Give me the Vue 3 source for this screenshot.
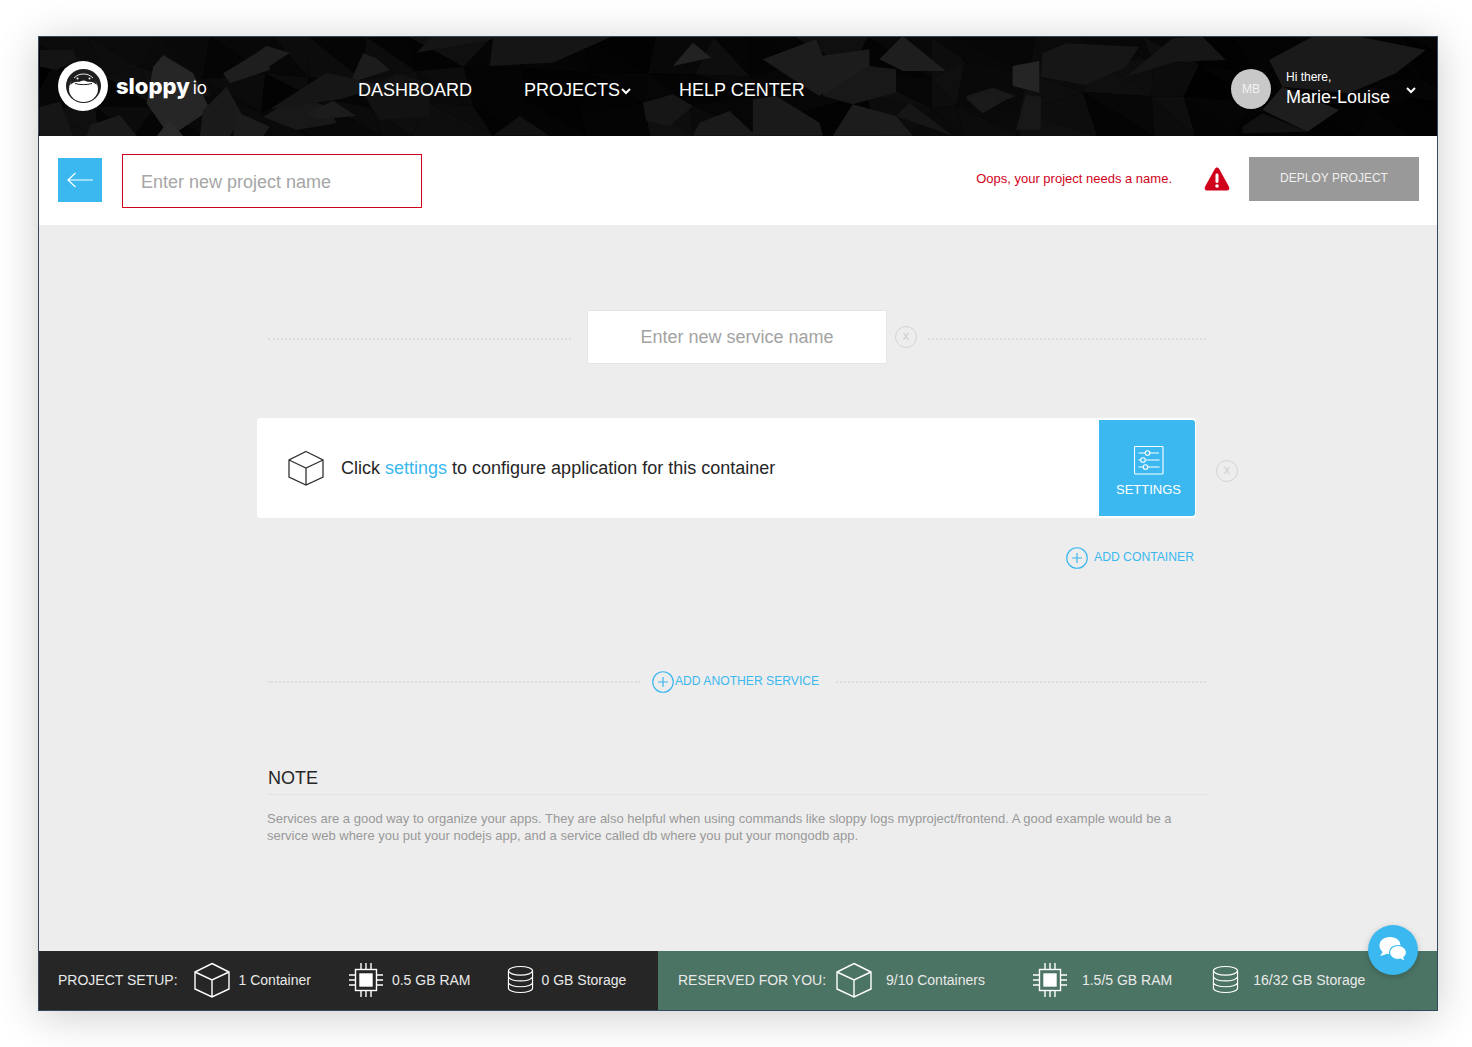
<template>
  <div class="page">
    <div class="window">
      <header class="topbar">
        <svg class="shards" viewBox="0 0 1399 99" preserveAspectRatio="none">
          <polygon v-for="(s, i) in baseShards" :key="'b' + i" :points="s.p" :fill="s.c" />
          <polygon v-for="(s, i) in shards" :key="i" :points="s.p" :fill="s.c" />
        </svg>
        <div class="brand">
          <svg class="brand-mark" viewBox="0 0 50 50">
            <circle cx="25" cy="25" r="25" fill="#fff" />
            <ellipse cx="25.500" cy="25" rx="17.500" ry="17" fill="#1f1f1f" />
            <ellipse cx="25.500" cy="28" rx="14.500" ry="13" fill="#fff" />
            <path d="M12 24c2-7 7-12 13.500-12S37 17 39 24c-3-3-7-4-9-3-1.500-1-3-1.500-4.500-1.500S22.500 20 21 21c-2-1-6 0-9 3z" fill="#1f1f1f" />
            <path d="M16 17c3-3 6-4 9.500-4s6.500 1 9.500 4" fill="none" stroke="#fff" stroke-width=".9" />
            <path d="M17 22.500c5 1.500 12 1.500 17 0" fill="none" stroke="#1f1f1f" stroke-width="1" />
            <circle cx="19.500" cy="17.500" r="1" fill="#fff" />
            <circle cx="31.500" cy="17.500" r="1" fill="#fff" />
          </svg>
          <span class="brand-name">sloppy</span>
          <span class="brand-io">io</span>
        </div>
        <nav class="nav">
          <a>DASHBOARD</a>
          <a class="nav-projects">PROJECTS<svg class="chev small" viewBox="0 0 10 7"><path d="M1 1l4 4 4-4" /></svg></a>
          <a>HELP CENTER</a>
        </nav>
        <div class="user">
          <div class="avatar">MB</div>
          <div class="user-text">
            <div class="hi">Hi there,</div>
            <div class="user-name">Marie-Louise</div>
          </div>
          <svg class="chev" viewBox="0 0 10 7"><path d="M1 1l4 4 4-4" /></svg>
        </div>
      </header>

      <div class="toolbar">
        <button class="back">
          <svg viewBox="0 0 26 16" width="26" height="16"><path d="M26 8H1M8.500 1L1 8l7.500 7" /></svg>
        </button>
        <div class="project-input">Enter new project name</div>
        <div class="error-text">Oops, your project needs a name.</div>
        <svg class="warn" viewBox="0 0 26 26" width="26" height="26">
          <path d="M13 1.500c-1 0-1.700.6-2.200 1.500L1 20.800c-1 2 0 3.700 2 3.700h20c2 0 3-1.700 2-3.700L15.200 3c-.5-.9-1.200-1.500-2.200-1.500z" fill="#d0021b" />
          <rect x="11.500" y="7.500" width="3" height="9.500" rx="1.400" fill="#fff" />
          <circle cx="13" cy="20" r="1.800" fill="#fff" />
        </svg>
        <button class="deploy">DEPLOY PROJECT</button>
      </div>

      <main class="main">
        <div class="service-row">
          <span class="dots dots-a"></span>
          <div class="service-input">Enter new service name</div>
          <span class="close">x</span>
          <span class="dots dots-b"></span>
        </div>

        <div class="card-row">
          <div class="card">
            <svg class="card-cube" viewBox="0 0 36 36" width="36" height="36">
              <path d="M18 1.500L35 10v17L18 35 1 27V10zM1 10l17 8 17-8M18 18v17" />
            </svg>
            <p class="card-text">Click <a>settings</a> to configure application for this container</p>
            <div class="settings">
              <svg viewBox="0 0 30 30" width="30" height="30">
                <rect x=".5" y=".5" width="28.500" height="27.500" rx="1" />
                <path d="M4.500 7h6.500m5 0h9M4.500 14h2.500m5 0h13.500M4.500 21h4.500m5 0h11.500" />
                <circle cx="13.500" cy="7" r="2.300" />
                <circle cx="9" cy="14" r="2.300" />
                <circle cx="11.500" cy="21" r="2.300" />
              </svg>
              <span>SETTINGS</span>
            </div>
          </div>
          <span class="close close-card">x</span>
        </div>

        <div class="add-container">
          <svg class="plus" viewBox="0 0 22 22" width="22" height="22">
            <circle cx="11" cy="11" r="10.250" />
            <path d="M11 6v10M6 11h10" />
          </svg>
          <span>ADD CONTAINER</span>
        </div>

        <div class="another-row">
          <span class="dots dots-c"></span>
          <svg class="plus" viewBox="0 0 22 22" width="22" height="22">
            <circle cx="11" cy="11" r="10.250" />
            <path d="M11 6v10M6 11h10" />
          </svg>
          <span class="another-label">ADD ANOTHER SERVICE</span>
          <span class="dots dots-d"></span>
        </div>

        <section class="note">
          <h2>NOTE</h2>
          <p>Services are a good way to organize your apps. They are also helpful when using commands like sloppy logs myproject/frontend. A good example would be a service web where you put your nodejs app, and a service called db where you put your mongodb app.</p>
        </section>
      </main>

      <footer class="footer">
        <div v-for="group in footerGroups" :key="group.label" class="foot-group" :class="group.cls">
          <span class="foot-label">{{ group.label }}</span>
          <div v-for="item in group.items" :key="item.text" class="foot-item" :class="item.cls">
            <svg v-if="item.icon === 'cube'" viewBox="0 0 36 36" width="36" height="36" class="foot-icon">
              <path d="M18 1.500L35 10v17L18 35 1 27V10zM1 10l17 8 17-8M18 18v17" />
            </svg>
            <svg v-else-if="item.icon === 'chip'" viewBox="0 0 36 36" width="36" height="36" class="foot-icon">
              <rect x="7.500" y="7.500" width="21" height="21" />
              <rect x="12" y="12" width="12" height="12" class="solid" />
              <path d="M13 1v6.500M18 1v6.500M23 1v6.500M13 28.500V35M18 28.500V35M23 28.500V35M1 13h6.500M1 18h6.500M1 23h6.500M28.500 13H35M28.500 18H35M28.500 23H35" />
            </svg>
            <svg v-else viewBox="0 0 28 30" width="27" height="29" class="foot-icon db">
              <ellipse cx="14" cy="6" rx="12.500" ry="4.500" />
              <path d="M1.500 6v18c0 2.500 5.500 4.500 12.500 4.500s12.500-2 12.500-4.500V6M1.500 12c0 2.500 5.500 4.500 12.500 4.500s12.500-2 12.500-4.500M1.500 18c0 2.500 5.500 4.500 12.500 4.500s12.500-2 12.500-4.500" />
            </svg>
            <span>{{ item.text }}</span>
          </div>
        </div>
      </footer>

      <div class="chat">
        <svg viewBox="0 0 30 30" width="30" height="30">
          <path d="M12 2C6 2 1.500 5.500 1.500 10.500c0 2.500 1.200 4.700 3 6.300-.3 1.700-1.500 3-2.800 4 2.400 0 5-.8 6.800-2 1.100.3 2.300.4 3.500.4 6 0 10.500-3.700 10.500-8.700S18 2 12 2z" fill="#fff" />
          <path d="M20 10.500c-4.800 0-8.500 3-8.500 7s3.700 7 8.500 7c.9 0 1.800-.1 2.600-.3 1.300.9 3 1.600 5.200 1.700-1-.9-1.800-2-2-3.400 1.700-1.300 2.700-3 2.700-5 0-4-3.700-7-8.500-7z" fill="#fff" stroke="#3bb8ef" stroke-width="1.200" />
        </svg>
      </div>
    </div>
  </div>
</template>

<script setup>
// header texture: a dim jittered triangle strip, then brighter shards on top
let seed = 7
const rnd = () => {
  seed = (seed * 16807) % 2147483647
  return seed / 2147483647
}
const grey = (v) => {
  const h = Math.round(v).toString(16).padStart(2, '0')
  return `#${h}${h}${h}`
}
const baseShards = []
const rows = [0, 33, 66, 99]
const grid = []
for (let col = 0; col <= 26; col++) {
  grid.push(rows.map((y) => [col * 55 + (rnd() - 0.5) * 34, y === 0 || y === 99 ? y : y + (rnd() - 0.5) * 22]))
}
for (let col = 0; col < 26; col++) {
  for (let r = 0; r < 3; r++) {
    const a = grid[col][r]
    const b = grid[col + 1][r]
    const c = grid[col + 1][r + 1]
    const d = grid[col][r + 1]
    // the strip is darker behind the nav and towards the user block
    const x = col * 55
    const dim = (x > 470 && x < 590) || x > 1150 ? 0.35 : 1
    baseShards.push({ p: [a, b, c].join(' '), c: grey((3 + rnd() * 12) * dim) })
    baseShards.push({ p: [a, c, d].join(' '), c: grey((3 + rnd() * 12) * dim) })
  }
}

// points read off 3x crops of the shot (ox/oy = crop offset)
const shard = (ox, oy, c, pts) => ({
  c,
  p: pts
    .split(' ')
    .map((pt) => {
      const [x, y] = pt.split(',').map(Number)
      return `${ox + x / 3},${oy + y / 3}`
    })
    .join(' ')
})

const shards = [
  shard(-9, -7, '#141414', '30,60 130,60 140,90 80,120 30,110'),
  shard(-9, -7, '#161616', '30,230 90,215 130,318 30,318'),
  shard(-9, -7, '#1a1a1a', '170,318 180,285 270,255 320,318'),
  shard(-9, -7, '#262626', '370,110 400,75 490,130 540,240 420,320 350,220'),
  shard(-9, -7, '#2a2a2a', '380,318 420,270 460,318'),
  shard(-9, -7, '#1a1a1a', '520,240 590,170 640,260 600,318 510,318'),
  shard(-9, -7, '#1e1e1e', '580,130 710,50 720,120 600,160'),
  shard(-9, -7, '#1c1c1c', '610,318 620,245 720,290 700,318'),
  shard(-9, -7, '#181818', '700,260 800,200 900,230 920,280 800,300'),
  shard(-9, -7, '#1c1c1c', '1000,70 1040,85 1080,120 960,160'),
  shard(-9, -7, '#121212', '1000,190 1100,130 1200,160 1200,260 1050,270'),
  shard(161, -1, '#1e1e1e', '70,120 200,30 270,50 210,90'),
  shard(161, -1, '#161616', '210,220 380,110 560,150 420,190'),
  shard(161, -1, '#1c1c1c', '320,230 400,195 470,240 350,250'),
  shard(161, -1, '#151515', '650,50 880,10 870,90 1060,80 1240,0 700,0'),
  shard(161, -1, '#111111', '880,299 960,240 1050,299'),
  shard(581, -1, '#222222', '160,90 220,20 275,65'),
  shard(581, -1, '#161616', '70,200 160,175 220,210 150,270 80,255'),
  shard(581, -1, '#1a1a1a', '240,260 330,225 410,299 220,299'),
  shard(581, -1, '#1a1a1a', '400,190 470,180 600,260 610,299 400,299'),
  shard(581, -1, '#1c1c1c', '430,70 590,10 640,140 600,180 520,130'),
  shard(581, -1, '#1c1c1c', '600,60 750,40 750,100 610,180'),
  shard(581, -1, '#1e1e1e', '780,70 850,0 980,105 850,105'),
  shard(581, -1, '#181818', '610,180 750,90 830,100 830,170 700,205'),
  shard(581, -1, '#1c1c1c', '640,299 700,205 830,240 880,299'),
  shard(581, -1, '#161616', '830,240 870,200 1000,299'),
  shard(581, -1, '#191919', '1040,180 1120,155 1190,180 1080,225'),
  shard(581, -1, '#252525', '1180,90 1260,75 1260,170 1180,150'),
  shard(911, -7, '#181818', '200,299 230,195 275,200 275,299'),
  shard(911, -7, '#161616', '275,140 280,70 350,40 570,50 530,110 410,165'),
  shard(911, -7, '#1a1a1a', '50,205 120,185 160,215 100,250'),
  shard(911, -7, '#161616', '530,140 670,25 760,20 830,90 680,95'),
  shard(911, -7, '#1a1a1a', '960,90 1090,20 1230,20 1430,60 1340,130 1200,190 1000,170'),
  shard(911, -7, '#1e1e1e', '940,240 1000,170 1170,240 1075,305'),
  shard(911, -7, '#111111', '880,290 940,250 1075,305 880,310')
]

const footerGroups = [
  {
    label: 'PROJECT SETUP:',
    cls: 'left',
    items: [
      { icon: 'cube', text: '1 Container', cls: 'l1' },
      { icon: 'chip', text: '0.5 GB RAM', cls: 'l2' },
      { icon: 'db', text: '0 GB Storage', cls: 'l3' }
    ]
  },
  {
    label: 'RESERVED FOR YOU:',
    cls: 'right',
    items: [
      { icon: 'cube', text: '9/10 Containers', cls: 'r1' },
      { icon: 'chip', text: '1.5/5 GB RAM', cls: 'r2' },
      { icon: 'db', text: '16/32 GB Storage', cls: 'r3' }
    ]
  }
]
</script>

<style>
html, body {
  margin: 0;
  background: #fff;
}
</style>

<style scoped>
.page {
  box-sizing: border-box;
  height: 1047px;
  padding: 36px 0 0 38px;
  overflow: hidden;
}
.window {
  position: relative;
  box-sizing: border-box;
  width: 1400px;
  height: 975px;
  border: 1px solid #34495e;
  display: flex;
  flex-direction: column;
  background: #ededed;
  box-shadow: 0 5px 40px rgba(0, 0, 0, 0.2);
  font-family: "Liberation Sans", Arial, sans-serif;
  color: #262626;
}

.topbar {
  position: relative;
  flex: none;
  height: 99px;
  display: flex;
  align-items: center;
  background: #000;
  color: #fff;
  overflow: hidden;
}
.shards {
  position: absolute;
  inset: 0;
  width: 100%;
  height: 100%;
}
.brand, .nav, .user {
  position: relative;
  display: flex;
  align-items: center;
}
.brand {
  margin-left: 19px;
  width: 300px;
  margin-top: -1px;
}
.brand-mark {
  width: 50px;
  height: 50px;
  flex: none;
}
.brand-name {
  margin-left: 8px;
  font-family: Inter, sans-serif;
  font-size: 22px;
  font-weight: 800;
}
.brand-io {
  margin-left: 3px;
  font-family: Inter, sans-serif;
  font-size: 17px;
  font-weight: 400;
  position: relative;
  top: 2px;
}
.nav {
  gap: 48px;
  font-size: 18px;
  margin-top: 7px;
}
.nav-projects {
  display: flex;
  align-items: center;
  margin-left: 4px;
}
.chev {
  width: 10px;
  height: 7px;
  fill: none;
  stroke: #fff;
  stroke-width: 2;
}
.chev.small {
  margin-top: 2px;
  margin-left: 1px;
}
.user {
  margin-left: auto;
  margin-right: 21px;
  margin-top: 5px;
}
.avatar {
  width: 40px;
  height: 40px;
  border-radius: 50%;
  background: #c8c8c8;
  color: #f2f2f2;
  font-size: 12px;
  line-height: 40px;
  text-align: center;
}
.user-text {
  margin-left: 15px;
  width: 120px;
}
.hi {
  font-size: 12px;
  line-height: 14px;
}
.user-name {
  margin-top: 2px;
  font-size: 18px;
  line-height: 22px;
}
.user > .chev {
  margin-top: 2px;
}

.toolbar {
  flex: none;
  height: 89px;
  display: flex;
  align-items: center;
  background: #fff;
}
.back {
  width: 44px;
  height: 44px;
  margin: 0 0 2px 19px;
  padding: 0;
  border: 0;
  background: #3bb8ef;
  display: flex;
  align-items: center;
  justify-content: center;
}
.back svg {
  fill: none;
  stroke: #fff;
  stroke-width: 1.200;
}
.project-input {
  box-sizing: border-box;
  width: 300px;
  height: 54px;
  margin-left: 20px;
  padding-left: 18px;
  border: 1px solid #d0021b;
  color: #a6a6a6;
  font-size: 18px;
  line-height: 54px;
}
.error-text {
  margin-left: auto;
  color: #d0021b;
  font-size: 13px;
  margin-top: -5px;
}
.warn {
  margin: 0 0 3px 32px;
}
.deploy {
  width: 170px;
  height: 44px;
  margin: 0 18px 4px 19px;
  padding: 0 0 2px;
  border: 0;
  background: #999;
  color: #efefef;
  font-family: inherit;
  font-size: 12px;
}

.main {
  flex: 1;
  padding: 85px 0 0 218px;
}
.service-row {
  display: flex;
  align-items: center;
  height: 54px;
}
.dots {
  display: block;
  height: 0;
  border-top: 2px dotted #dcdcdc;
}
.dots-a {
  width: 303px;
  margin-left: 11px;
  margin-top: 3px;
}
.service-input {
  box-sizing: border-box;
  width: 300px;
  height: 54px;
  margin-left: 16px;
  background: #fff;
  border: 1px solid #e6e6e6;
  color: #a3a3a3;
  font-size: 18px;
  line-height: 52px;
  text-align: center;
}
.close {
  box-sizing: border-box;
  width: 22px;
  height: 22px;
  border: 1px solid #d4d4d4;
  border-radius: 50%;
  color: #cfcfcf;
  font-size: 13px;
  line-height: 18px;
  text-align: center;
  flex: none;
}
.service-input + .close {
  margin-left: 8px;
}
.dots-b {
  width: 278px;
  margin-left: 11px;
  margin-top: 3px;
}
.card-row {
  display: flex;
  align-items: center;
  margin-top: 54px;
}
.card {
  box-sizing: border-box;
  width: 939px;
  height: 100px;
  padding: 2px 1px 2px 31px;
  display: flex;
  align-items: center;
  background: #fff;
  border-radius: 4px;
}
.card-cube {
  fill: none;
  stroke: #333;
  stroke-width: 1.300;
}
.card-text {
  flex: 1;
  margin: 0 0 0 17px;
  font-size: 18px;
  color: #262626;
}
.card-text a {
  color: #3bb8ef;
}
.settings {
  box-sizing: border-box;
  width: 96px;
  height: 96px;
  padding-left: 3px;
  background: #3bb8ef;
  border-radius: 0 3px 3px 0;
  color: #fff;
  display: flex;
  flex-direction: column;
  align-items: center;
  font-size: 13px;
}
.settings svg {
  margin-top: 26px;
  fill: none;
  stroke: #fff;
  stroke-width: 1.100;
}
.settings svg circle {
  fill: #3bb8ef;
}
.settings span {
  margin-top: 6px;
}
.close-card {
  margin: 5px 0 0 20px;
}
.add-container {
  display: flex;
  align-items: center;
  gap: 6px;
  width: 937px;
  justify-content: flex-end;
  margin-top: 29px;
  color: #3bb8ef;
  font-size: 12.200px;
}
.add-container span {
  margin-top: -2px;
}
.plus {
  flex: none;
  fill: none;
  stroke: #3bb8ef;
  stroke-width: 1.200;
}
.another-row {
  display: flex;
  align-items: center;
  margin-top: 102px;
  height: 22px;
  color: #3bb8ef;
  font-size: 12.150px;
}
.dots-c {
  width: 372px;
  margin-left: 11px;
  margin-right: 12px;
}
.another-label {
  margin: -2px 0 0 1px;
}
.dots-d {
  width: 370px;
  margin-left: 17px;
}
.note {
  margin: 75px 0 0 11px;
  width: 940px;
}
.note h2 {
  margin: 0;
  padding-bottom: 6px;
  border-bottom: 1px solid #e3e3e3;
  font-size: 18px;
  font-weight: 400;
  line-height: 20px;
  color: #262626;
}
.note p {
  margin: 16px 0 0 -1px;
  color: #999;
  font-size: 13px;
  line-height: 16.600px;
}

.footer {
  flex: none;
  height: 59px;
  display: flex;
  color: #e9e9e9;
  font-size: 14px;
}
.foot-group {
  box-sizing: border-box;
  display: flex;
  align-items: center;
  padding: 0 0 2px 19px;
}
.foot-group.left {
  width: 619px;
  background: #262626;
}
.foot-group.right {
  flex: 1;
  padding-left: 20px;
  background: #4c7464;
}
.foot-item {
  display: flex;
  align-items: center;
}
.foot-item span {
  margin-left: 9px;
}
.foot-icon {
  fill: none;
  stroke: #fff;
  stroke-width: 1.400;
}
.foot-icon .solid {
  fill: #fff;
}
.foot-icon.db {
  stroke-width: 1.200;
}
.l1 { margin-left: 16px; }
.l2 { margin-left: 37px; }
.l2 span { margin-left: 8px; }
.l3 { margin-left: 36px; }
.l3 span { margin-left: 8px; }
.r1 { margin-left: 10px; }
.r1 span { margin-left: 14px; }
.r2 { margin-left: 47px; }
.r2 span { margin-left: 14px; }
.r3 { margin-left: 40px; }
.r3 span { margin-left: 14px; }

.chat {
  position: absolute;
  right: 19px;
  bottom: 35px;
  width: 50px;
  height: 50px;
  border-radius: 50%;
  background: #3bb8ef;
  box-shadow: 0 2px 6px rgba(0, 0, 0, 0.2);
  display: flex;
  align-items: center;
  justify-content: center;
}
</style>
